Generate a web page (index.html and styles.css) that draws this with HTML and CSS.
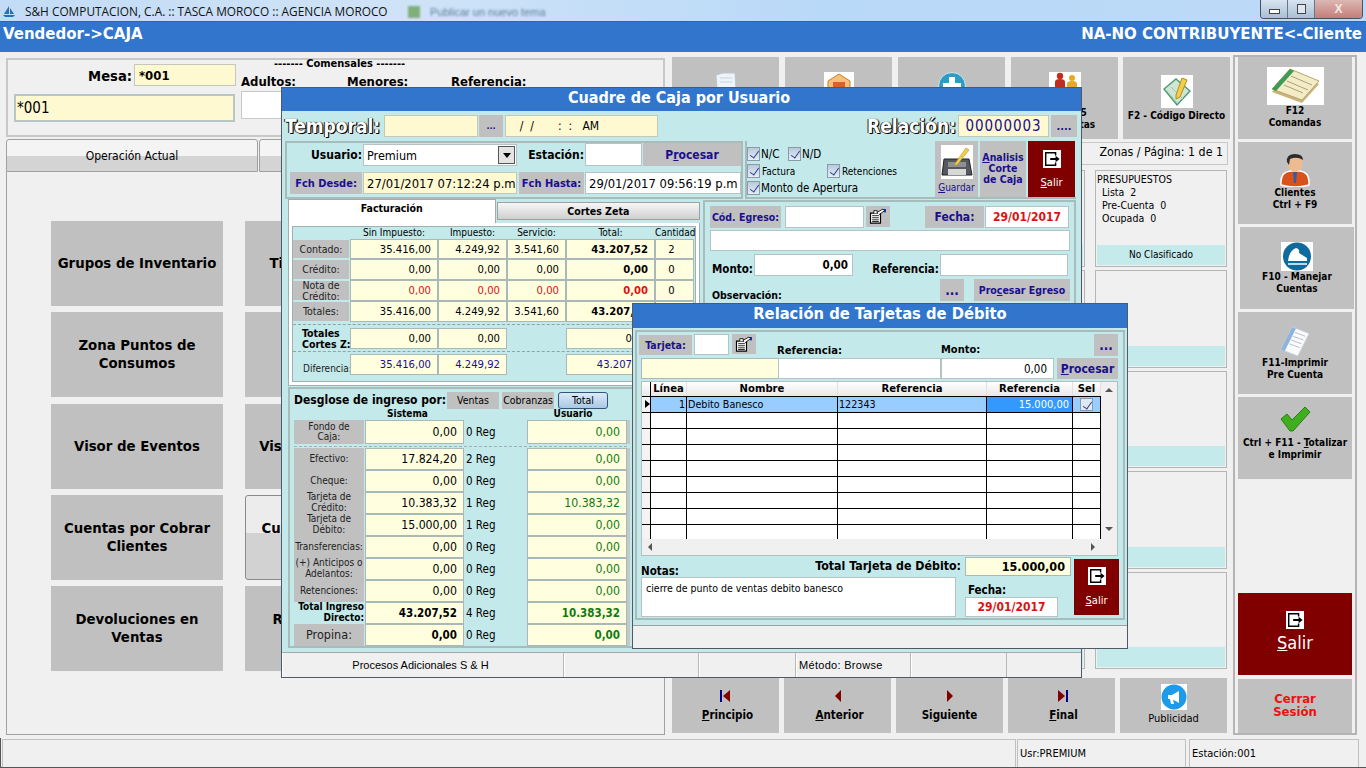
FILE: index.html
```html
<!DOCTYPE html>
<html lang="es">
<head>
<meta charset="utf-8">
<title>S&amp;H Computacion</title>
<link rel="stylesheet" href="styles.css">
</head>
<body>
<svg class="defs" width="0" height="0">
  <symbol id="exit" viewBox="0 0 20 20"><rect width="20" height="20" fill="#fff"/><path d="M14 6V3H3V17H14V14" fill="none" stroke="#000" stroke-width="1.6"/><path d="M8 9H14V6.5L18.5 10L14 13.5V11H8Z" fill="#000"/></symbol>
  <symbol id="form" viewBox="0 0 24 20"><path d="M3 6H15V18H3Z" fill="#fff" stroke="#000" stroke-width="1.4"/><path d="M5 9H13M5 11.5H13M5 14H13M5 16H13" stroke="#000"/><path d="M7 6V3H11V6M11 5L18 1L20 3L13 8" fill="#fff" stroke="#000"/><rect x="19" y="1" width="2.5" height="4" fill="#003399"/></symbol>
</svg>

<header class="titlebar">
  <svg class="app-ico" width="14" height="14" viewBox="0 0 14 14"><path d="M2 10L7 2V10ZM8 4L12 10H8ZM1 11H13L11 13H3Z" fill="#2a6fb0"/></svg>
  <span class="app-title">S&amp;H COMPUTACION, C.A. :: TASCA MOROCO :: AGENCIA MOROCO</span>
  <span class="ghost"><i class="ghost-sq"></i>Publicar un nuevo tema</span>
  <div class="winctl">
    <span class="wc wc-min"><i></i></span>
    <span class="wc wc-max"><i></i></span>
    <span class="wc wc-close">X</span>
  </div>
</header>

<div class="bluebar"><span>Vendedor-&gt;CAJA</span><span>NA-NO CONTRIBUYENTE&lt;-Cliente</span></div>

<main class="main">
  <section class="leftcol">
    <div class="toppanel">
      <div class="tp-a">
        <div class="mesa-row"><span class="mesa-l">Mesa:</span><span class="fy mesa-f">*001</span></div>
        <div class="fy mesa-wide">*001</div>
      </div>
      <div class="tp-b">
        <div class="comensales">------- Comensales -------</div>
        <div class="tp-labels"><span class="lb-ad">Adultos:</span><span class="lb-me">Menores:</span><span>Referencia:</span></div>
        <div class="tp-input"></div>
      </div>
    </div>
    <div class="tabs">
      <div class="tab">Operación Actual</div>
      <div class="tab tab2">Otras</div>
    </div>
    <div class="leftbody">
      <button class="gb big">Grupos de Inventario</button><button class="gb big">Tipos de Precios</button>
      <button class="gb big">Zona Puntos de Consumos</button><button class="gb big">Zonas</button>
      <button class="gb big">Visor de Eventos</button><button class="gb big">Visor de Comandas</button>
      <button class="gb big">Cuentas por Cobrar Clientes</button><button class="gb big hover">Cuentas por Pagar<br>Proveedores</button>
      <button class="gb big">Devoluciones en Ventas</button><button class="gb big">Reimpresión de<br>Facturas</button>
    </div>
  </section>

  <section class="centercol">
    <div class="topbtns">
      <button class="gb tb"><svg width="22" height="18" viewBox="0 0 22 18"><path d="M1 3L8 1L20 1L21 17H2Z" fill="#eef3f8" stroke="#b9c6d2"/><path d="M5 6H17M5 10H17" stroke="#c7d3df"/></svg></button>
      <button class="gb tb"><svg width="30" height="18" viewBox="0 0 30 18"><rect width="30" height="18" fill="#fff"/><path d="M4 9L15 2L26 9V18H4Z" fill="#f2c27a" stroke="#c87c28"/><rect x="9" y="10" width="12" height="8" fill="#d9622b"/></svg></button>
      <button class="gb tb"><svg width="28" height="18" viewBox="0 0 28 18"><circle cx="14" cy="14" r="13.5" fill="#2f9cc4" stroke="#cfe8f2"/><path d="M11 5H17V11H23V17H5V11H11Z" fill="#fff"/></svg></button>
      <button class="gb tb tb-txt"><svg width="32" height="18" viewBox="0 0 32 18"><rect width="32" height="18" fill="#fff"/><circle cx="11" cy="4" r="3.2" fill="#c42b1c"/><path d="M6 18V10Q6 7 11 7T16 10V18Z" fill="#c42b1c"/><circle cx="23" cy="6" r="3" fill="#e9a821"/><path d="M18 18V12Q18 9 23 9T28 12V18Z" fill="#e9a821"/></svg><span class="tb-lines">Ctrl + F5<br>Ver Cuentas</span></button>
      <button class="gb tb f2">
        <svg width="32" height="33" viewBox="0 0 32 33"><rect width="32" height="33" fill="#fff"/><path d="M3 14L15 4L29 16L16 30Z" fill="#cfe6d5" stroke="#4d9a72" stroke-width="1.4"/><path d="M6 16L16 28M10 12L22 24" stroke="#9cc8ae"/><path d="M15 20L21 3L26 5L19 22L15 24Z" fill="#f2cf4b" stroke="#b48a1c"/></svg>
        <span>F2 - Código Directo</span>
      </button>
    </div>
    <div class="zones">Zonas / Página: 1 de 1</div>
    <div class="cards">
      <div class="card"><i class="band"></i></div>
      <div class="card"><div class="cardtxt">PRESUPUESTOS<br><span>Lista&nbsp;&nbsp;2</span><br><span>Pre-Cuenta&nbsp;&nbsp;0</span><br><span>Ocupada&nbsp;&nbsp;0</span></div><i class="band">No Clasificado</i></div>
      <div class="card"><i class="band"></i></div><div class="card"><i class="band"></i></div>
      <div class="card"><i class="band"></i></div><div class="card"><i class="band"></i></div>
      <div class="card"><i class="band"></i></div><div class="card"><i class="band"></i></div>
      <div class="card"><i class="band"></i></div><div class="card"><i class="band"></i></div>
    </div>
    <nav class="navbtns">
      <button class="gb nv"><svg width="16" height="12" viewBox="0 0 16 12"><rect x="2" y="0" width="2" height="12" fill="#000080"/><path d="M12 0V12L5 6Z" fill="#800000"/></svg><span><u>P</u>rincipio</span></button>
      <button class="gb nv"><svg width="16" height="12" viewBox="0 0 16 12"><path d="M11 0V12L5 6Z" fill="#800000"/></svg><span><u>A</u>nterior</span></button>
      <button class="gb nv nv-s"><svg width="16" height="12" viewBox="0 0 16 12"><path d="M5 0V12L11 6Z" fill="#800000"/></svg><span>Si<u>g</u>uiente</span></button>
      <button class="gb nv"><svg width="16" height="12" viewBox="0 0 16 12"><path d="M4 0V12L11 6Z" fill="#800000"/><rect x="12" y="0" width="2" height="12" fill="#000080"/></svg><span><u>F</u>inal</span></button>
      <button class="gb nv pub"><svg width="26" height="26" viewBox="0 0 26 26"><rect width="26" height="26" fill="#fff"/><circle cx="13" cy="13" r="12.5" fill="#1e9be8"/><path d="M7 11H11L18 7V19L11 15H7ZM9 15H12L13 20H10Z" fill="#fff"/></svg><span>Publicidad</span></button>
    </nav>
  </section>

  <aside class="sidebar">
    <button class="gb sb sb-12"><svg width="57" height="38" viewBox="0 0 57 38"><rect width="57" height="38" fill="#fff"/><path d="M5 25L23 4L52 17L35 36Z" fill="#c9b37a"/><path d="M5 22L23 2L52 14L35 33Z" fill="#f3ecc6" stroke="#b8a76d"/><path d="M5 22L23 2L27 4L9 24Z" fill="#3f9a55"/><path d="M20 14L41 23M17 18L36 26M24 9L45 18" stroke="#a8a27d"/></svg><span>F12<br>Comandas</span></button>
    <button class="gb sb sb-cl"><svg width="34" height="34" viewBox="0 0 34 34"><path d="M3 32Q2 19 12 18H22Q32 19 31 32Q17 36 3 32Z" fill="#d9521c" stroke="#fff" stroke-width="1.5"/><path d="M15 19H19L18 30H16Z" fill="#345aa8"/><ellipse cx="17" cy="10" rx="7.5" ry="9" fill="#eebb91"/><path d="M9 9Q8 1 17 1Q25 1 25 7Q19 3 12 6L11 12Z" fill="#2c2c2c"/></svg><span>Clientes<br>Ctrl + F9</span></button>
    <button class="gb sb sb-off"><svg width="32" height="29" viewBox="0 0 32 29"><rect width="32" height="29" fill="#fff"/><circle cx="16" cy="14.5" r="14" fill="#0f6a9e"/><path d="M7 19Q8 9 15 6Q19 7 18 11L26 16V19Z" fill="#fff"/><path d="M7 22H26" stroke="#fff" stroke-width="1.5"/></svg><span>F10 - Manejar<br>Cuentas</span></button>
    <button class="gb sb sb-11"><svg width="32" height="32" viewBox="0 0 32 34"><path d="M13 2L31 9L19 33L1 26Z" fill="#fbfcfe" stroke="#c6d0dc"/><path d="M13 2L1 26L5 28L17 4Z" fill="#8fb4dc"/><path d="M16 8L27 12M14 12L25 16M12 16L23 20M10 20L21 24" stroke="#b5bcc6"/></svg><span>F11-Imprimir<br>Pre Cuenta</span></button>
    <button class="gb sb sb-to"><svg width="32" height="26" viewBox="0 0 32 26"><path d="M2 13L8 8L13 14L26 1L31 6L14 25H11Z" fill="#3fae1f" stroke="#2b7d14"/></svg><span>Ctrl + F11 - <u>T</u>otalizar<br>e Imprimir</span></button>
    <button class="gb sb sb-exit"><svg class="ex" width="18" height="18"><use href="#exit"/></svg><span><u>S</u>alir</span></button>
    <button class="gb sb-close">Cerrar<br>Sesión</button>
  </aside>
</main>

<footer class="statusbar"><div class="sc sc1"></div><div class="sc sc2">Usr:PREMIUM</div><div class="sc sc3">Estación:001</div></footer>

<!-- Ventana: Cuadre de Caja -->
<section class="win w1">
  <h2 class="wtitle">Cuadre de Caja por Usuario</h2>
  <div class="wbody">
    <div class="r1">
      <span class="shadow sh-t">Temporal:</span><span class="fy f-temp"></span><button class="gb dots dots1">...</button><span class="fy f-date">&nbsp;&nbsp;/&nbsp;&nbsp;/&nbsp;&nbsp;&nbsp;&nbsp;&nbsp;&nbsp;&nbsp;:&nbsp;&nbsp;:&nbsp;&nbsp;&nbsp;AM</span>
      <span class="shadow sh-r">Relación:</span><span class="fy f-rel">00000003</span><button class="gb dots dots2">....</button>
    </div>
    <div class="r2">
      <div class="grpA">
        <span class="lblk">Usuario:</span>
        <div class="fw select"><span>Premium</span><i class="caret"><svg width="8" height="5" viewBox="0 0 8 5"><path d="M0 0H8L4 5Z"/></svg></i></div>
        <span class="lblk">Estación:</span>
        <span class="fw"></span>
        <button class="gb navy proc"><span>P<u>r</u>ocesar</span></button>
        <span class="gl gl-d">Fch Desde:</span>
        <span class="fy dt">27/01/2017 07:12:24 p.m</span>
        <span class="gl gl-h">Fch Hasta:</span>
        <span class="fw dt dt2">29/01/2017 09:56:19 p.m</span>
      </div>
      <div class="grpB">
        <div class="checks">
          <label class="ck ck-nc"><i class="cb"></i>N/C</label><label class="ck ck-nd"><i class="cb"></i>N/D</label>
          <label class="ck ck-sm ck-fa"><i class="cb"></i>Factura</label><label class="ck ck-sm ck-re"><i class="cb"></i>Retenciones</label>
          <label class="ck ck-mo"><i class="cb"></i>Monto de Apertura</label>
        </div>
        <button class="gb hb hb-g"><svg width="32" height="34" viewBox="0 0 32 34"><rect width="32" height="34" fill="#fff"/><path d="M3 14H28L31 30H1Z" fill="#55585c" stroke="#222"/><rect x="7" y="24" width="18" height="6" fill="#d8d8d8"/><rect x="7" y="17" width="18" height="5" fill="#8d9095"/><path d="M13 20L25 3L28 5L16 20Z" fill="#efd04e" stroke="#b08d1e" stroke-width=".6"/></svg><span><u>G</u>uardar</span></button>
        <button class="gb hb hb-a"><span><u>A</u>nalisis<br>Corte<br>de Caja</span></button>
        <button class="gb hb hb-s"><svg width="18" height="18"><use href="#exit"/></svg><span><u>S</u>alir</span></button>
      </div>
    </div>
    <div class="r3">
      <div class="col-l">
        <div class="fact">
          <div class="ftabs"><div class="ft-on">Facturación</div><div class="ft-off">Cortes Zeta</div></div>
          <div class="fpanel">
            <div class="ftable">
              <span></span><span class="th">Sin Impuesto:</span><span class="th">Impuesto:</span><span class="th">Servicio:</span><span class="th">Total:</span><span class="th">Cantidad</span>
              <span class="rl">Contado:</span><span class="c">35.416,00</span><span class="c">4.249,92</span><span class="c">3.541,60</span><span class="c b">43.207,52</span><span class="c q">2</span>
              <span class="rl">Crédito:</span><span class="c">0,00</span><span class="c">0,00</span><span class="c">0,00</span><span class="c b">0,00</span><span class="c q">0</span>
              <span class="rl">Nota de<br>Crédito:</span><span class="c red">0,00</span><span class="c red">0,00</span><span class="c red">0,00</span><span class="c b red">0,00</span><span class="c q">0</span>
              <span class="rl">Totales:</span><span class="c">35.416,00</span><span class="c">4.249,92</span><span class="c">3.541,60</span><span class="c b">43.207,52</span><span class="c q">4</span>
            </div>
            <div class="ftable ft2 dash">
              <span class="rb">Totales<br>Cortes Z:</span><span class="c">0,00</span><span class="c">0,00</span><span></span><span class="c">0,00</span><span></span>
            </div>
            <div class="ftable ft3 dash">
              <span class="rp">Diferencia:</span><span class="c navyt">35.416,00</span><span class="c navyt">4.249,92</span><span></span><span class="c navyt">43.207,52</span><span></span>
            </div>
          </div>
        </div>
        <div class="desg">
          <div class="dhead"><strong>Desglose de ingreso por:</strong><button class="gb dh">Ventas</button><button class="gb dh">Cobranzas</button><button class="dh dh-on">Total</button></div>
          <div class="dgrid dcap"><span></span><b class="cap-s">Sistema</b><span></span><b class="cap-u">Usuario</b></div>
          <div class="dgrid dfondo">
            <span class="dl">Fondo de<br>Caja:</span><span class="d">0,00</span><span class="reg">0 Reg</span><span class="d g">0,00</span>
          </div>
          <div class="dgrid drows">
            <span class="dl">Efectivo:</span><span class="d">17.824,20</span><span class="reg">2 Reg</span><span class="d g">0,00</span>
            <span class="dl">Cheque:</span><span class="d">0,00</span><span class="reg">0 Reg</span><span class="d g">0,00</span>
            <span class="dl">Tarjeta de<br>Crédito:</span><span class="d">10.383,32</span><span class="reg">1 Reg</span><span class="d g">10.383,32</span>
            <span class="dl">Tarjeta de<br>Débito:</span><span class="d">15.000,00</span><span class="reg">1 Reg</span><span class="d g">0,00</span>
            <span class="dl">Transferencias:</span><span class="d">0,00</span><span class="reg">0 Reg</span><span class="d g">0,00</span>
            <span class="dl">(+) Anticipos o<br>Adelantos:</span><span class="d">0,00</span><span class="reg">0 Reg</span><span class="d g">0,00</span>
            <span class="dl">Retenciones:</span><span class="d">0,00</span><span class="reg">0 Reg</span><span class="d g">0,00</span>
            <span class="dl dl-t">Total Ingreso<br>Directo:</span><span class="d b">43.207,52</span><span class="reg">4 Reg</span><span class="d g b">10.383,32</span>
            <span class="dl dl-p">Propina:</span><span class="d b">0,00</span><span class="reg">0 Reg</span><span class="d g b">0,00</span>
          </div>
        </div>
      </div>
      <div class="col-r">
        <div class="e1"><span class="gl e-cod">Cód. Egreso:</span><span class="fw e-in"></span><button class="gb ico"><svg width="20" height="17"><use href="#form"/></svg></button><span class="gl e-fe">Fecha:</span><span class="fw e-date">29/01/2017</span></div>
        <div class="fw e-wide"></div>
        <div class="e3"><b class="e-ml">Monto:</b><span class="fw e-mo">0,00</span><b class="e-rl">Referencia:</b><span class="fw e-re"></span></div>
        <div class="e4"><b>Observación:</b><button class="gb navy e-dots">...</button><button class="gb navy e-pr"><span>Pro<u>c</u>esar Egreso</span></button></div>
      </div>
    </div>
  </div>
  <div class="wstatus"><div class="wsc s1">Procesos Adicionales S &amp; H</div><div class="wsc s2"></div><div class="wsc s3"></div><div class="wsc s4">Método: Browse</div><div class="wsc s5"></div></div>
</section>

<!-- Ventana: Relación de Tarjetas de Débito -->
<section class="win w2">
  <h2 class="wtitle wt2">Relación de Tarjetas de Débito</h2>
  <div class="w2body">
    <div class="w2frame">
      <div class="t1">
        <span class="gl t-lab">Tarjeta:</span><span class="fw t-in"></span><button class="gb ico t-ico"><svg width="20" height="17"><use href="#form"/></svg></button>
        <b class="t-ref">Referencia:</b><b class="t-mon">Monto:</b><button class="gb navy t-dots">...</button>
      </div>
      <div class="t2"><span class="c t2a"></span><span class="fw t2b"></span><span class="fw t2c">0,00</span><button class="gb navy t2p"><span><u>P</u>rocesar</span></button></div>
      <div class="gridbox">
        <div class="gridmain">
          <div class="grow ghead"><span></span><span>Línea</span><span>Nombre</span><span>Referencia</span><span>Referencia</span><span>Sel</span></div>
          <div class="grow gsel"><span class="ind"><i class="arrow"></i></span><span class="ar">1</span><span>Debito Banesco</span><span>122343</span><span class="ar hi">15.000,00</span><span class="cc"><i class="cb"></i></span></div>
          <div class="grow"><span class="ind"></span><span></span><span></span><span></span><span></span><span></span></div>
          <div class="grow"><span class="ind"></span><span></span><span></span><span></span><span></span><span></span></div>
          <div class="grow"><span class="ind"></span><span></span><span></span><span></span><span></span><span></span></div>
          <div class="grow"><span class="ind"></span><span></span><span></span><span></span><span></span><span></span></div>
          <div class="grow"><span class="ind"></span><span></span><span></span><span></span><span></span><span></span></div>
          <div class="grow"><span class="ind"></span><span></span><span></span><span></span><span></span><span></span></div>
          <div class="grow"><span class="ind"></span><span></span><span></span><span></span><span></span><span></span></div>
          <div class="grow glast"><span class="ind"></span><span></span><span></span><span></span><span></span><span></span></div>
        </div>
        <div class="vscroll"><i class="up"></i><i class="down"></i></div>
        <div class="hscroll"><i class="lf"></i><i class="rg"></i></div>
      </div>
      <div class="t4">
        <div class="t4l">
          <div class="t4h"><b class="t-notas">Notas:</b><b class="t-total">Total Tarjeta de Débito:</b></div>
          <div class="fw t-area">cierre de punto de ventas debito banesco</div>
        </div>
        <div class="t4m">
          <span class="c b t-tv">15.000,00</span>
          <b class="t-fl">Fecha:</b>
          <span class="fw e-date t-fv">29/01/2017</span>
        </div>
        <button class="gb hb hb-s t-salir"><svg width="18" height="18"><use href="#exit"/></svg><span><u>S</u>alir</span></button>
      </div>
    </div>
  </div>
  <div class="w2status"></div>
</section>
</body>
</html>
```
FILE: styles.css
```css
:root{
  --font:"DejaVu Sans Condensed","DejaVu Sans",sans-serif;
  --gray:#c0c0c0;
  --blue:#3176cc;
  --teal:#c3e9ea;
  --yel:#fff9d2;
  --pale:#ffffe0;
  --navy:#1a0f8f;
  --maroon:#800000;
  --line:#a9b9b9;
}
*{box-sizing:border-box}
html,body{margin:0;padding:0}
body{width:1366px;height:768px;overflow:hidden;background:#f0f0f0;font-family:var(--font);font-size:11px;color:#000;position:relative;display:flex;flex-direction:column;font-stretch:condensed}
button{font-family:inherit;font-stretch:inherit;border:0;padding:0;margin:0;color:inherit}
i{font-style:normal}
.defs{position:absolute}

/* title bar */
.titlebar{height:22px;flex:none;display:flex;align-items:center;padding-left:2px;position:relative;background:linear-gradient(90deg,#c2dcf5 0,#cfe3f7 30%,#b9d9f8 60%,#bcdaf8 100%);border-bottom:1px solid #51606e}
.app-ico{margin-right:9px}
.app-title{font-family:"Open Sans",sans-serif;font-stretch:normal;font-size:11.85px;color:#111;white-space:nowrap}
.ghost{position:absolute;left:408px;top:6px;font-family:"Liberation Sans",sans-serif;font-size:11px;color:#5f7f98;filter:blur(.8px);display:flex;align-items:center;gap:10px}
.ghost-sq{width:12px;height:12px;background:#7fb07a}
.winctl{position:absolute;left:1260px;top:0;width:103px;height:19px;display:flex;border:1px solid #46525e;border-top:0;border-radius:0 0 4px 4px;overflow:hidden}
.wc{display:flex;align-items:center;justify-content:center;background:linear-gradient(#d7e4f1,#a9bfd4);border-right:1px solid #68788a}
.wc-min{width:27px}.wc-max{width:27px}
.wc-min i{width:11px;height:5px;border:1px solid #444;background:#fff;margin-top:4px}
.wc-max i{width:9px;height:10px;border:1.5px solid #444;background:#dfe8f0}
.wc-close{flex:1;border:0;background:linear-gradient(#dbb7b4,#c47f78);color:#f5e6e4;font:bold 12px "Liberation Sans",sans-serif}

/* blue bar */
.bluebar{height:30px;flex:none;background:var(--blue);color:#fff;font-weight:bold;font-size:16.7px;display:flex;justify-content:space-between;padding:1px 4px 0 3px}

/* main */
.main{flex:none;height:686px;display:flex;padding-top:3px}
.leftcol{width:659px;margin:3px 0 3px 6px;display:flex;flex-direction:column}
.toppanel{height:79px;border:2px solid #c8c8c8;display:flex;background:#f0f0f0}
.tp-a{width:228px;padding:4px 0 0 6px}
.mesa-row{display:flex;justify-content:flex-end;align-items:center;height:22px}
.mesa-l{font-weight:bold;font-size:14.6px;margin-right:2px}
.fy{background:var(--yel);border:1px solid #c3c8b8;display:flex;align-items:center}
.mesa-f{width:102px;height:22px;font-weight:bold;font-size:13px;padding-left:4px}
.mesa-wide{margin-top:8px;height:28px;width:221px;font-size:15px;padding-left:1px;border:2px solid #b9c6c6}
.tp-b{flex:1;position:relative;padding-left:5px}
.comensales{font-weight:bold;font-size:11px;padding-left:33px;height:12px;margin-top:-2px;line-height:12px}
.tp-labels{display:flex;font-weight:bold;font-size:13px;margin-top:4px}
.lb-ad{width:106px}.lb-me{width:104px}
.tp-input{width:60px;height:28px;background:#fff;border:1px solid #c8c8c8;margin-top:2px}
.tabs{display:flex;height:33px;margin-top:2px;gap:1px}
.tab{width:252px;background:linear-gradient(#f4f4f4 0 50%,#d4d4d4 50% 100%);border:1px solid #a0a0a0;border-radius:3px 3px 0 0;display:flex;align-items:center;justify-content:center;font-size:12px}
.tab2{flex:1}
.leftbody{flex:1;border:1px solid #a0a0a0;border-top:0;padding:49px 0 0 44px;display:grid;grid-template-columns:172px 172px;column-gap:22px;grid-auto-rows:85px;row-gap:6.25px;align-content:start}
.gb{background:var(--gray);display:flex;align-items:center;justify-content:center;text-align:center}
.big{font-size:14.8px;font-weight:bold;line-height:18px;padding:0 4px 1px}
.hover{background:linear-gradient(#ececec 0 45%,#d2d2d2 45% 100%);border:1px solid #8a8a8a;border-radius:3px}

/* centre */
.centercol{width:558px;margin:2px 0 0 7px;display:flex;flex-direction:column}
.topbtns{display:grid;grid-template-columns:repeat(5,107px);column-gap:6px;height:82px}
.tb{flex-direction:column;justify-content:flex-start;padding-top:15px;font-weight:bold;font-size:10px}
.tb-lines{margin-top:17px;line-height:12px;white-space:nowrap}
.f2{padding-top:18px;margin-left:-1px;margin-right:1px}
.f2 svg{margin-bottom:1px}
.f2 span{line-height:13px;white-space:nowrap}
.zones{height:23px;margin:3px 2px 0 0;background:#f0f0f0;border:1px solid #c8c8c8;text-align:right;padding:2px 4px 0 0;font-size:12.3px}
.cards{margin-top:5px;height:499px;display:grid;grid-template-columns:132px 132px;column-gap:10px;justify-content:end;grid-template-rows:repeat(5,1fr);row-gap:3px;padding-right:3px}
.card{border:1px solid #b5b5b5;background:#f0f0f0;display:flex;flex-direction:column;justify-content:flex-end;position:relative;padding:1px}
.band{height:20px;background:#c5eaeb;display:block;text-align:center;font-size:10px;line-height:19px}
.cardtxt{flex:1;font-size:10.5px;line-height:13px;padding-top:1px}
.cardtxt span{margin-left:5px}
.navbtns{margin-top:9px;display:grid;grid-template-columns:repeat(5,107px);column-gap:5px;height:55px}
.nv{flex-direction:column;justify-content:flex-start;padding-top:12px;font-weight:bold;font-size:11.5px;gap:6px}
.nv span{margin-left:4px}
.nv-s span{margin-left:0}
.pub{font-weight:normal;font-size:11px;padding-top:6px;gap:2px}
.pub span{margin-left:0}

/* sidebar */
.sidebar{width:124px;margin-left:3px;border:2px solid #b4b4b4;height:680px;padding:0 3px;display:flex;flex-direction:column;gap:3px}
.sb{width:114px;height:82px;flex:none;flex-direction:column;font-size:10px;font-weight:bold;line-height:12px;justify-content:flex-start;padding-top:10px}
.sb-cl{padding-top:11px}
.sb-off{margin-left:2px;padding-top:15px}
.sb-11{padding-top:13px}
.sb-to{padding-top:9px}
.sb-to span{margin-top:5px}
.sb-exit{background:var(--maroon);color:#fff;margin-top:auto;font-weight:normal;font-size:18px;padding-top:18px;gap:4px}
.sb-exit span{line-height:20px}
.sb-close{width:114px;height:54px;flex:none;margin-top:1px;padding-bottom:3px;background:var(--gray);color:#ee1111;font-weight:bold;font-size:13px;line-height:13px}

/* status */
.statusbar{flex:none;height:30px;padding:1px 0 0 0;display:flex;border-bottom:1px solid #555;border-left:1px solid #555}
.sc{border:1px solid #c0c0c0;border-bottom:0;display:flex;align-items:center;padding-left:2px;font-size:11px}
.sc1{width:1014px;margin-left:1px}.sc2{width:169px;margin-left:1px}.sc3{width:170px;margin-left:3px}

/* windows */
.win{position:absolute;border:1px solid #4e5a66;background:#f0f0f0;display:flex;flex-direction:column}
.w1{left:281px;top:87px;width:801px;height:591px}
.w2{left:632px;top:303px;width:496px;height:346px}
.wtitle{margin:0;flex:none;height:23px;background:var(--blue);color:#fff;font-size:16px;font-weight:bold;text-align:center;line-height:20px;padding-right:5px}
.wt2{height:24px;font-size:16.4px;line-height:19px;padding:0}
.wbody{flex:1;background:var(--teal);min-height:0}
.wstatus{flex:none;height:25px;display:flex;border-top:1px solid #a8a8a8}
.wsc{border-right:1px solid #b8b8b8;border-left:1px solid #fff;display:flex;align-items:center;font:11px "Liberation Sans",sans-serif}
.s1{width:282px;justify-content:center;padding-right:5px}.s2{width:135px}.s3{width:97px}.s4{width:115px;padding-left:2px;letter-spacing:.3px}.s5{width:96px}

.r1{display:flex;padding:4px 0 0 3px;height:26px}
.shadow{font-weight:bold;font-size:19px;color:#fff;text-shadow:1px 1px 0 #000,-1px 0 0 #222,1px 0 1px #333;line-height:22px}
.sh-t{width:99px}
.f-temp{width:94px;height:22px}
.dots{height:22px;color:var(--navy);font-weight:bold;font-size:9px}
.dots1{width:24px;margin:0 2px 0 1px}
.f-date{width:153px;height:22px;font-size:12px;padding-left:7px}
.sh-r{margin-left:auto;margin-right:2px}
.f-rel{width:91px;height:22px;font-size:15px;color:var(--navy);justify-content:center;letter-spacing:.9px}
.dots2{width:26px;margin:0 4px 0 2px;font-size:11px}

.r2{display:flex;margin-top:4px;padding-left:3px;height:58px;gap:2px}
.grpA{width:458px;border:2px solid #a8bcbc;display:grid;grid-template-columns:75px 154px 66px 57px 98px;grid-template-rows:23px 22px;column-gap:1px;row-gap:6px}
.lblk{font-weight:bold;font-size:12px;display:flex;justify-content:flex-end;align-items:center}
.fw{background:#fff;border:1px solid #b4c4c4;display:flex;align-items:center}
.select{justify-content:space-between;padding-left:3px;font-size:12.5px;height:22px;margin-top:1px}
.caret{width:17px;height:18px;border:1px solid #555;background:#e4e4e4;display:flex;align-items:center;justify-content:center;margin-right:1px}
.navy{color:var(--navy);font-weight:bold}
.proc{font-size:12px;height:23px}
.gl{background:var(--gray);color:var(--navy);font-weight:bold;display:flex;align-items:center;justify-content:center;font-size:11px}
.gl-d{margin-left:3px}
.gl-h{margin-left:1px}
.dt{font-size:12.9px;padding-left:3px;white-space:nowrap}
.dt2{grid-column:span 2}
.grpB{width:331px;display:flex;border:2px solid #a8bcbc;border-top:0;border-right:0}
.checks{width:188px;display:grid;grid-template-columns:41px 39px 1fr;grid-template-rows:19px 16px 18px;padding:3px 0 0 0;font-size:11.5px}
.ck{display:flex;align-items:center;gap:1px;white-space:nowrap}
.cb{width:13px;height:14px;border:1px solid #8a9aa8;background:linear-gradient(#b9c9dc,#e6eef6);position:relative;display:inline-block;flex:none}
.cb::after{content:"";position:absolute;left:3.5px;top:1px;width:4px;height:8px;border:solid #2c3f8a;border-width:0 1.5px 1.5px 0;transform:rotate(35deg)}
.ck-nd{grid-column:2/4}
.ck-sm{font-size:10px;gap:2px}
.ck-fa{grid-column:1/3}
.ck-mo{grid-column:1/4}
.hb{flex-direction:column;height:56px;flex:none}
.hb-g{width:43px;font-size:10px;color:var(--navy);gap:3px;justify-content:flex-start;padding-top:4px}
.hb-a{width:46px;margin-left:2px;color:var(--navy);font-weight:bold;font-size:10.5px;line-height:11px;padding-bottom:2px}
.hb-s{width:47px;margin-left:2px;background:var(--maroon);color:#fff;font-size:11px;gap:8px;padding-top:0}

.r3{display:flex;padding-left:6px}
.col-l{width:412px;flex:none}
.fact{height:187px;display:flex;flex-direction:column}
.ftabs{display:flex;height:24px;flex:none;font-weight:bold;font-size:10.5px}
.ft-on{width:208px;background:#fff;border:1px solid #a9a9a9;border-bottom:0;text-align:center;padding-top:2px;height:24px}
.ft-off{width:204px;margin:3px 0 3px 1px;background:linear-gradient(#f6f6f6,#cfcfcf);border:1px solid #a0a0a0;text-align:center;line-height:17px}
.fpanel{flex:1;height:161px;border:1px solid #9fb0b0;border-top:0;background:var(--teal);box-shadow:inset 0 0 0 3px #fff,inset 0 0 0 4px #9fb0b0;padding:2px 0 0 4px}
.ftable{display:grid;grid-template-columns:57px 88px 69px 59px 89px 39px;grid-template-rows:14px 20px 21px 21px 21px}
.th{font-size:10px;text-align:center;line-height:14px;white-space:nowrap;padding-top:1px}
.rl{background:var(--gray);font-size:10.5px;line-height:11px;display:flex;align-items:center;justify-content:center;text-align:center;margin:1px 1px 1px 0;color:#222}
.c{background:var(--pale);border:1px solid #a9b9b9;display:flex;align-items:center;justify-content:flex-end;padding-right:6px;font-size:11.2px;white-space:nowrap}
.b{font-weight:bold}
.red{color:#e01010}
.q{justify-content:center}
.dash{border-top:1px dashed #8fa3a3;margin-top:2px;padding-top:3px}
.ft2{grid-template-rows:21px}
.ft3{grid-template-rows:21px;padding-top:2px}
.rb{font-weight:bold;font-size:10.5px;line-height:11px;padding-left:9px;display:flex;align-items:center;white-space:nowrap}
.rp{font-size:10px;display:flex;align-items:flex-end;padding-left:10px;color:#222;padding-bottom:1px}
.navyt{color:var(--navy)}

.desg{height:261px;margin-top:1px;border:2px solid #a8bcbc;padding:2px 0 0 4px}
.dhead{display:flex;align-items:center;height:18px;gap:3px}
.dhead strong{font-size:12px;width:150px;white-space:nowrap}
.dh{width:52px;height:17px;font-size:10.5px}
.dh-on{width:50px;margin-left:1px;background:linear-gradient(#dcebf8,#a8c8e4);border:1px solid #33557a;border-radius:3px;display:flex;align-items:center;justify-content:center}
.dgrid{display:grid;grid-template-columns:70px 99px 61px 100px;column-gap:1px;width:333px}
.dcap{height:11px;font-size:10px;line-height:10px;text-align:center}
.cap-s{padding-right:14px}
.cap-u{padding-right:8px}
.dfondo{height:24px}
.drows{grid-auto-rows:22px;margin-top:2px;border-top:1px dashed #9fb0b0;padding-top:1px}
.dl{background:var(--gray);font-size:10px;line-height:10.5px;display:flex;align-items:center;justify-content:center;text-align:center;color:#222;white-space:nowrap;height:21.5px}
.dfondo .dl{height:24px}
.dl-t{font-weight:bold;text-align:right;justify-content:flex-end;background:none;color:#000}
.dl-p{font-size:12.5px}
.d{background:var(--pale);border:1px solid #a9b9b9;display:flex;align-items:center;justify-content:flex-end;padding-right:6px;font-size:12.2px}
.d.g{color:#0f7a0f;box-shadow:3px 0 0 #c3c8c8}
.d.b{font-size:11.5px}
.reg{font-size:11.5px;display:flex;align-items:center;padding-left:1px}

.col-r{width:373px;margin-left:3px;border:2px solid #a8bcbc;margin-top:1px;padding:4px 0 0 5px}
.e1{display:flex;height:22px}
.e-cod{width:71px;font-size:10.5px}
.e-in{width:79px;margin-left:4px}
.ico{width:24px;height:21px;margin-left:2px}
.e-fe{width:59px;margin-left:35px;font-size:12px}
.e-date{width:84px;margin-left:1px;color:#e01010;font-weight:bold;font-size:12px;justify-content:center}
.e-wide{width:360px;height:21px;margin-top:2px}
.e3{display:flex;align-items:flex-end;height:23px;margin-top:2px;font-size:11.5px}
.e-ml{width:44px;padding-left:2px}
.e-mo{width:99px;height:22px;justify-content:flex-end;padding-right:4px;font-weight:bold;font-size:11.5px}
.e-rl{margin-left:19px;width:67px;text-align:right;white-space:nowrap}
.e-re{width:128px;height:22px;margin-left:1px}
.e4{display:flex;height:22px;margin-top:3px;align-items:flex-end;padding-left:2px;font-size:10.5px}
.e4 b{width:228px;height:11px;line-height:11px}
.e-dots{width:24px;height:22px}
.e-pr{width:96px;height:22px;margin-left:10px;font-size:10.5px}

/* window 2 */
.w2body{flex:1;background:var(--teal);padding:2px 2px 5px 2px}
.w2frame{height:290px;border:2px solid #a8bcbc;padding:0 5px 0 4px;display:flex;flex-direction:column}
.w2status{height:23px;flex:none;border-top:1px solid #9f9f9f}
.t1{display:flex;height:26px;align-items:flex-start;padding-top:2px}
.t-lab{width:53px;height:20px;margin-top:1px;margin-left:-2px;font-size:10.5px}
.t-in{width:35px;height:21px;margin-left:2px}
.t-ico{margin-left:3px;height:20px}
.t-ref{margin-left:21px;margin-top:10px;font-size:11.2px;width:164px}
.t-mon{font-size:11px;margin-top:9px;width:153px}
.t-dots{width:24px;height:22px}
.t2{display:flex;height:21px}
.t2a{width:137px;border-right:0;padding:0}
.t2b{width:163px}
.t2c{width:113px;justify-content:flex-end;padding-right:6px;font-size:11.5px}
.t2p{width:61px;margin-left:3px;font-size:12px}
.gridbox{margin-top:2px;height:175px;width:477px;border:1px solid #b4c0c0;background:#f0f0f0;display:grid;grid-template-columns:459px 17px;grid-template-rows:157px 16px}
.gridmain{background:#fff;overflow:hidden}
.grow{display:grid;grid-template-columns:9px 36px 151px 149px 86px 28px;height:16px;border-bottom:1px solid #000;font-size:10.7px}
.grow>span{border-right:1px solid #000;overflow:hidden;padding:0 1px;line-height:16px;white-space:nowrap}
.ghead{height:15px;font-weight:bold;text-align:center;background:linear-gradient(#fff,#e8e8e8);font-size:11.2px}
.ghead>span{border-right:1px solid #e0e0e0;line-height:14px}
.ghead>span:first-child{border-right:1px solid #000;padding:0}
.gsel{background:#99ccff}
.gsel .hi{background:#3399ff;color:#fff;font-size:11px;padding-right:3px}
.ind{padding:0!important;background:#f3f3f3;position:relative}
.arrow{position:absolute;left:3px;top:3px;border:solid transparent;border-width:4px 0 4px 5px;border-left-color:#000}
.ar{text-align:right}
.cc{display:flex;align-items:center;justify-content:center}
.cc .cb{height:13px;background:#dfe9f3}
.glast{border-bottom:0}
.vscroll{position:relative}
.up,.down,.lf,.rg{position:absolute;border:solid transparent}
.up{left:4px;top:6px;border-width:0 4px 4px;border-bottom-color:#555}
.down{left:4px;bottom:8px;border-width:4px 4px 0;border-top-color:#555}
.hscroll{position:relative;grid-column:1}
.lf{left:6px;top:4px;border-width:4px 4px 4px 0;border-right-color:#555}
.rg{right:6px;top:4px;border-width:4px 0 4px 4px;border-left-color:#555}
.t4{display:grid;grid-template-columns:324px 109px 45px;height:60px;margin-top:1px}
.t4l{display:flex;flex-direction:column}
.t4h{height:20px;display:flex;justify-content:space-between;align-items:flex-start;padding-right:4px}
.t-notas{font-size:11.5px;margin-top:7px}
.t-total{font-size:12.3px;margin-top:2px}
.t-area{width:315px;height:40px;align-items:flex-start;padding:4px 0 0 4px;font-size:10.5px}
.t4m{display:flex;flex-direction:column}
.t-tv{height:19px;font-size:12.5px;width:106px;padding-right:5px}
.t-fl{font-size:11.5px;margin:8px 0 0 3px;line-height:13px}
.t-fv{width:93px;height:20px;margin:0}
.t-salir{width:45px;height:56px;margin:2px 0 0 0;gap:9px}
```
